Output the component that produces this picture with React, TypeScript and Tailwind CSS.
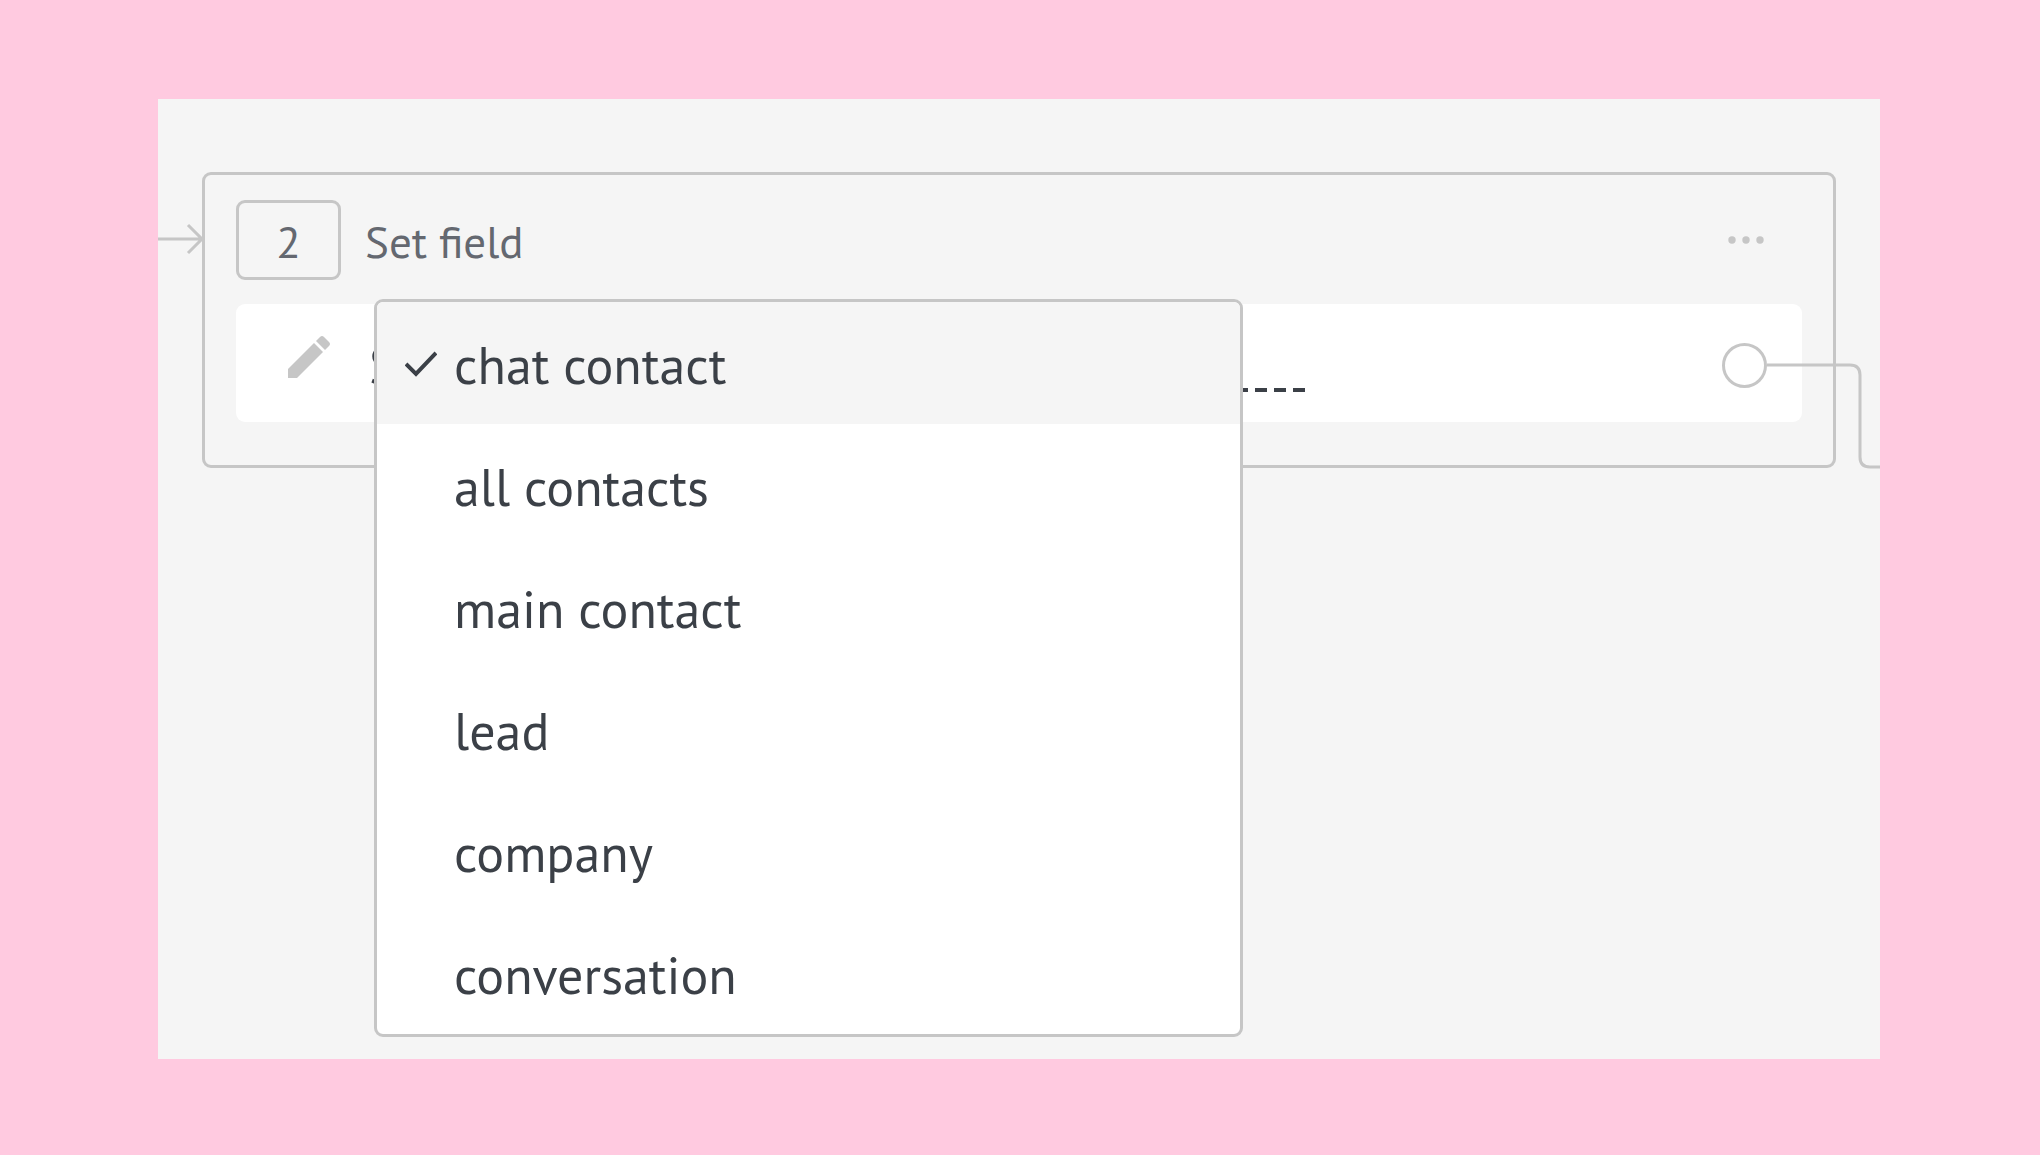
import { useState } from "react";

const options = ["chat contact", "all contacts", "main contact", "lead", "company", "conversation"];

const PencilIcon = () => (
    <svg className="size-11" viewBox="0 0 44 44" fill="#c6c6c6" aria-hidden="true">
        <path d="M1 43V34L27 8L36 17L10 43Z" />
        <path d="M29 6L33 2Q35 0 37 2L42 7Q44 9 42 11L38 15Z" />
    </svg>
);

const CheckIcon = () => (
    <svg className="size-8" viewBox="0 0 32 32" fill="none" stroke="#3b4047" strokeWidth="4" aria-hidden="true">
        <path d="M1 15L11 25L31 4" />
    </svg>
);

// arrow that comes in from the previous step
const IncomingArrow = () => (
    <svg className="absolute right-full top-12 h-8 w-12" viewBox="0 0 48 32" fill="none" stroke="#c6c6c6" strokeWidth="3" aria-hidden="true">
        <path d="M0 16H45M31 2L45 16L31 30" />
    </svg>
);

// line that leads out to the next step
const OutgoingLine = () => (
    <svg className="absolute left-full top-5 h-[106px] w-[115px]" viewBox="0 0 115 106" fill="none" stroke="#c6c6c6" strokeWidth="3" aria-hidden="true">
        <path d="M0 2H83Q93 2 93 12V94Q93 104 103 104H115" />
    </svg>
);

export default function App() {
    const [selected, setSelected] = useState("chat contact");

    return (
        <main className="flex min-h-screen flex-col bg-[#ffcae0] pt-[99px] pr-40 pb-24 pl-[158px] font-['PT_Sans','Noto_Sans',sans-serif]">
            <section className="flex-1 overflow-hidden bg-[#f5f5f5] px-11 pt-[73px]">
                <div className="relative rounded-[9px] border-3 border-[#c6c6c6] px-[31px] pt-[25px] pb-[43px]">
                    <IncomingArrow />

                    <header className="flex items-center pr-[38px]">
                        <span className="flex h-20 w-[105px] items-center justify-center rounded-[9px] border-3 border-[#c6c6c6] pt-1 text-[45px] text-[#646870]">2</span>
                        <h1 className="ml-6 pt-1 text-[45px] text-[#646870]">Set field</h1>
                        <button aria-label="Step actions" className="ml-auto">
                            <svg className="h-3 w-9" viewBox="0 0 36 12" fill="#c6c6c6">
                                <circle cx="4" cy="6" r="3.7" />
                                <circle cx="18" cy="6" r="3.7" />
                                <circle cx="32" cy="6" r="3.7" />
                            </svg>
                        </button>
                    </header>

                    <div className="relative mt-6 flex h-[118px] items-center rounded-[9px] bg-white pr-[35px] pl-[51px] text-[#3b4047]">
                        <button aria-label="Edit" className="mb-3">
                            <PencilIcon />
                        </button>
                        <span className="ml-[38px] pt-1 text-[52px]">Set</span>
                        <span className="mt-[54px] ml-4 h-1 w-[848px] bg-[repeating-linear-gradient(to_left,#3b4047_0_12px,transparent_12px_19px)]" />

                        <div className="relative mt-1 ml-auto">
                            <button aria-label="Connect next step" className="block size-[45px] rounded-full border-3 border-[#c6c6c6] bg-white" />
                            <OutgoingLine />
                        </div>

                        <div role="listbox" aria-label="Entity" className="absolute -top-[5px] left-[138px] w-[869px] overflow-hidden rounded-[9px] border-3 border-[#c6c6c6] bg-white">
                            {options.map((option) => (
                                <button
                                    key={option}
                                    role="option"
                                    aria-selected={option === selected}
                                    onClick={() => setSelected(option)}
                                    className="flex h-[122px] w-full items-center pt-1 pl-7 text-left text-[52px] aria-selected:bg-[#f5f5f5]"
                                >
                                    <span className="mr-[17px] w-8">{option === selected && <CheckIcon />}</span>
                                    {option}
                                </button>
                            ))}
                        </div>
                    </div>
                </div>
            </section>
        </main>
    );
}
